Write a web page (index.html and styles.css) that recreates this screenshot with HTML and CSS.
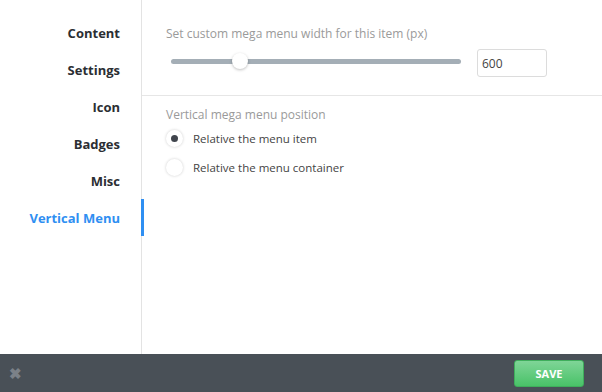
FILE: index.html
```html
<!doctype html>
<html lang="en">
  <head>
    <meta charset="UTF-8" />
    <meta name="viewport" content="width=device-width, initial-scale=1.0" />
    <title>Menu Item Settings</title>
    <link rel="stylesheet" href="styles.css">
  </head>
  <body>
    <div class="modal">
      <div class="main">
        <ul class="tabs">
          <li>Content</li>
          <li>Settings</li>
          <li>Icon</li>
          <li>Badges</li>
          <li>Misc</li>
          <li class="active">Vertical Menu</li>
        </ul>
        <div class="panel">
          <div class="section width">
            <div class="label">Set custom mega menu width for this item (px)</div>
            <div class="slider-row">
              <div class="slider">
                <div class="track"></div>
                <div class="thumb"></div>
              </div>
              <input class="num" type="text" value="600">
            </div>
          </div>
          <div class="section position">
            <div class="label">Vertical mega menu position</div>
            <label class="radio checked"><span class="dot"></span>Relative the menu item</label>
            <label class="radio"><span class="dot"></span>Relative the menu container</label>
          </div>
        </div>
      </div>
      <div class="footer">
        <span class="close">&#10006;</span>
        <button class="save">SAVE</button>
      </div>
    </div>
  </body>
</html>
```

FILE: styles.css
```css
body {
  margin: 0;
  padding: 0;
  background-color: #ffffff;
  font-family: "Open Sans", "Noto Sans", sans-serif;
}

.modal {
  display: flex;
  flex-direction: column;
  width: 602px;
  height: 392px;
}

.main {
  flex: 1;
  display: flex;
}

.tabs {
  list-style: none;
  margin: 0;
  padding: 15px 0 0 0;
  width: 141px;
  border-right: 1px solid #e3e3e3;
}

.tabs li {
  position: relative;
  height: 37px;
  line-height: 37px;
  padding-right: 21px;
  text-align: right;
  font-size: 13px;
  font-weight: 700;
  color: #2b2e33;
}

.tabs li.active {
  color: #2f8ff2;
}

.tabs li.active::after {
  content: "";
  position: absolute;
  top: -1px;
  right: -3px;
  width: 3px;
  height: 100%;
  background-color: #2f8ff2;
}

.panel {
  flex: 1;
}

.section {
  padding-left: 24px;
}

.label {
  font-size: 12px;
  color: #9a9a9a;
}

.width {
  padding-top: 25px;
  height: 70px;
  border-bottom: 1px solid #e6e6e6;
}

.slider-row {
  display: flex;
  align-items: center;
  margin-top: 7px;
}

.slider {
  position: relative;
  width: 290px;
  height: 16px;
  margin-left: 5px;
  top: -2px;
}

.track {
  position: absolute;
  left: 0;
  right: 0;
  top: 6px;
  height: 5px;
  border-radius: 3px;
  background-color: #a4aeb6;
}

.thumb {
  position: absolute;
  left: 61px;
  top: 0;
  width: 16px;
  height: 16px;
  border-radius: 50%;
  background-color: #ffffff;
  box-shadow: 0 1px 3px rgba(0, 0, 0, 0.25);
}

.num {
  margin-left: 16px;
  width: 70px;
  height: 28px;
  box-sizing: border-box;
  border: 1px solid #dcdcdc;
  border-radius: 3px;
  padding: 0 4px;
  font-family: "Open Sans", sans-serif;
  font-size: 12px;
  color: #444444;
}

.position {
  padding-top: 10px;
}

.radio {
  display: flex;
  align-items: center;
  height: 29px;
  font-size: 11.5px;
  color: #444444;
}

.position .label {
  margin-bottom: 1px;
}

.dot {
  position: relative;
  width: 17px;
  height: 17px;
  margin: 0 10px 0 0;
  border-radius: 50%;
  background-color: #ffffff;
  box-shadow: 0 0 3px rgba(0, 0, 0, 0.2);
}

.checked .dot::after {
  content: "";
  position: absolute;
  left: 5px;
  top: 5px;
  width: 7px;
  height: 7px;
  border-radius: 50%;
  background-color: #40454d;
}

.footer {
  height: 38px;
  background-color: #495057;
  display: flex;
  align-items: center;
  justify-content: space-between;
  padding: 0 18px 0 9px;
}

.close {
  color: #7b8188;
  font-size: 15px;
  font-weight: 700;
}

.save {
  width: 70px;
  height: 27px;
  border: 1px solid #3fae5c;
  border-radius: 3px;
  background: linear-gradient(#7fd597, #49c268);
  color: #ffffff;
  font-family: "Open Sans", sans-serif;
  font-size: 11px;
  font-weight: 700;
}
```
